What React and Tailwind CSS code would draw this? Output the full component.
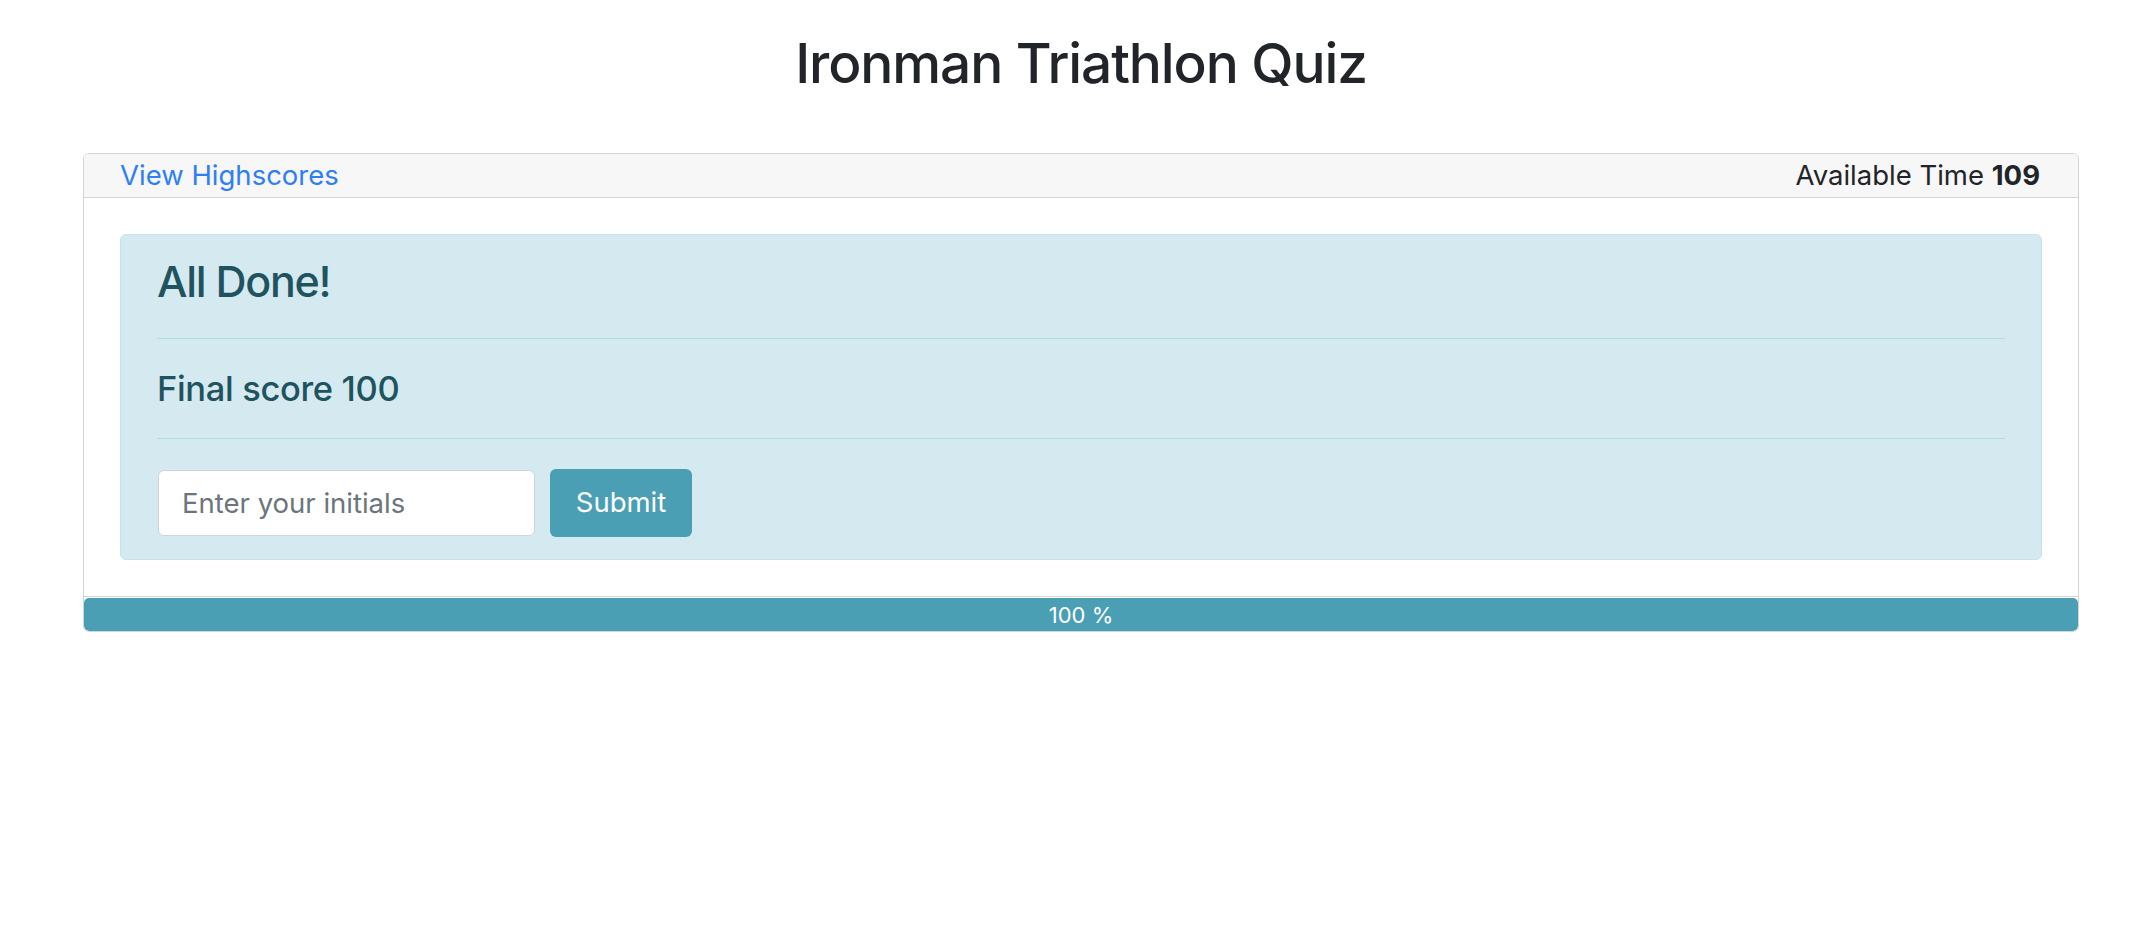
export default function App() {
  return (
    <div className="min-h-screen bg-white pl-[83px] pr-[77px] font-['Inter',sans-serif] text-[#212529]">
      <h1 className="pt-[30px] text-center text-[55px] font-medium leading-[66px] tracking-[-0.02em]">
        Ironman Triathlon Quiz
      </h1>

      <div className="mt-[57px] overflow-hidden rounded-[6px] border border-[#d5d5d5]">
        <div className="flex h-[44px] items-center justify-between border-b border-[#d5d5d5] bg-[#f7f7f7] pl-[36px] pr-[38px] text-[27.5px] leading-none">
          <a href="#" className="text-[#2f7ef7]">
            View Highscores
          </a>
          <span>
            Available Time <strong className="font-bold">109</strong>
          </span>
        </div>

        <div className="p-[36px]">
          <div className="rounded-[6px] border border-[#c4e4eb] bg-[#d5eaf0] px-[36px] pt-[20px] pb-[22px] text-[#1f5360]">
            <h2 className="text-[43px] font-medium leading-[53px] tracking-[-0.03em]">All Done!</h2>
            <hr className="mt-[30px] border-t border-[#b1dbe6]" />
            <h4 className="mt-[30px] text-[34.5px] font-medium leading-[40px] tracking-[-0.01em]">
              Final score 100
            </h4>
            <hr className="mt-[29px] border-t border-[#b1dbe6]" />
            <form
              className="mt-[30px] flex items-center gap-[15px]"
              onSubmit={(e) => e.preventDefault()}
            >
              <input
                type="text"
                placeholder="Enter your initials"
                className="ml-px h-[66px] w-[377px] rounded-[6px] border border-[#ced4da] bg-white px-[23px] text-[27.5px] text-[#495057] outline-none placeholder:text-[#6c757d]"
              />
              <button
                type="submit"
                className="h-[68px] w-[142px] rounded-[6px] bg-[#4a9fb5] text-[27.5px] text-white"
              >
                Submit
              </button>
            </form>
          </div>
        </div>

        <div className="border-t border-[#d5d5d5] pt-px">
          <div className="flex h-[33px] items-center justify-center rounded-[5px] bg-[#4a9fb5] text-[22px] leading-none text-white">
            100 %
          </div>
        </div>
      </div>
    </div>
  );
}
